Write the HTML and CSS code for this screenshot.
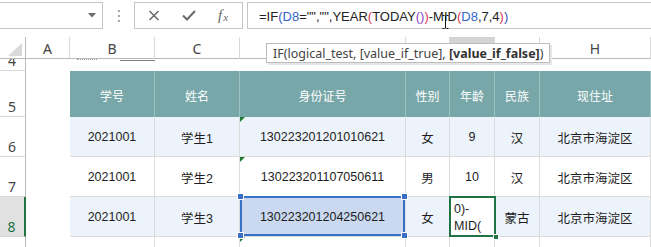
FILE: index.html
```html
<!DOCTYPE html>
<html lang="zh-CN">
<head>
<meta charset="utf-8">
<title>Sheet</title>
<link rel="stylesheet" href="styles.css">
</head>
<body>
<div class="app">
  <div class="toolbar">
    <div class="namebox">
      <svg class="dd" width="8" height="5" viewBox="0 0 8 5"><path d="M0 0h8L4 4.5z" fill="#6b6b6b"/></svg>
    </div>
    <div class="grip"><i></i><i></i><i></i></div>
    <div class="btns">
      <svg width="12" height="11" viewBox="0 0 12 11"><path d="M1.5 1l9 9M10.5 1l-9 9" stroke="#6a6a6a" stroke-width="1.5" fill="none"/></svg>
      <svg width="14" height="11" viewBox="0 0 14 11"><path d="M1 5.5l4 4L13 1" stroke="#6a6a6a" stroke-width="2" fill="none"/></svg>
      <span class="fx">f<span class="fxx">x</span></span>
    </div>
    <div class="formula"><span>=IF</span><span class="p1">(</span><span class="ref">D8</span>="","",YEAR<span class="p2">(</span>TODAY<span class="p3">()</span><span class="p2">)</span>-MID<span class="p2">(</span><span class="ref">D8</span>,7,4<span class="p2">)</span><span class="p1">)</span></div>
  </div>

  <div class="sheet">
    <!-- column header row -->
    <div class="ch corner"><span class="tri"></span></div>
    <div class="ch">A</div>
    <div class="ch">B</div>
    <div class="ch">C</div>
    <div class="ch">D</div>
    <div class="ch">E</div>
    <div class="ch ch-act">F</div>
    <div class="ch">G</div>
    <div class="ch">H</div>

    <!-- row 4 -->
    <div class="rh">4</div>
    <div class="blank"></div>
    <div class="blank"><span class="frag"></span><span class="uline"></span></div>
    <div class="blank"></div>
    <div class="blank"></div>
    <div class="blank"></div>
    <div class="blank"></div>
    <div class="blank"></div>
    <div class="blank"></div>

    <!-- row 5 header -->
    <div class="rh">5</div>
    <div class="blank"></div>
    <div class="th">学号</div>
    <div class="th">姓名</div>
    <div class="th">身份证号</div>
    <div class="th">性别</div>
    <div class="th">年龄</div>
    <div class="th">民族</div>
    <div class="th">现住址</div>

    <!-- row 6 -->
    <div class="rh">6</div>
    <div class="blank"></div>
    <div class="td alt">2021001</div>
    <div class="td alt">学生1</div>
    <div class="td alt err">130223201201010621</div>
    <div class="td alt">女</div>
    <div class="td alt">9</div>
    <div class="td alt">汉</div>
    <div class="td alt">北京市海淀区</div>

    <!-- row 7 -->
    <div class="rh">7</div>
    <div class="blank"></div>
    <div class="td">2021001</div>
    <div class="td">学生2</div>
    <div class="td err">130223201107050611</div>
    <div class="td">男</div>
    <div class="td">10</div>
    <div class="td">汉</div>
    <div class="td">北京市海淀区</div>

    <!-- row 8 -->
    <div class="rh rh-act">8</div>
    <div class="blank"></div>
    <div class="td alt">2021001</div>
    <div class="td alt">学生3</div>
    <div class="td sel err">130223201204250621
      <span class="selbox"><i class="hd tl"></i><i class="hd tr"></i><i class="hd bl"></i><i class="hd br"></i></span>
    </div>
    <div class="td alt">女</div>
    <div class="td active"><span class="edit">0)-<br>MID(</span><span class="actbox"><i class="fill"></i></span></div>
    <div class="td alt">蒙古</div>
    <div class="td alt">北京市海淀区</div>

    <!-- row 9 -->
    <div class="rh">9</div>
    <div class="blank"></div>
    <div class="td"></div>
    <div class="td"></div>
    <div class="td err"></div>
    <div class="td"></div>
    <div class="td"></div>
    <div class="td"></div>
    <div class="td"></div>
  </div>

  <div class="tooltip">IF(logical_test, [value_if_true], <b>[value_if_false]</b>)</div>
  <svg class="ibeam" width="9" height="16" viewBox="0 0 9 16"><path d="M1.5 1.5h2M5.5 1.5h2M4.5 1.5v13M1.5 14.5h2M5.5 14.5h2" stroke="#111" stroke-width="1" fill="none"/></svg>
</div>
</body>
</html>
```

FILE: styles.css
```css
html, body {
  margin: 0;
  padding: 0;
  background: #ffffff;
  overflow: hidden;
}

.app {
  position: relative;
  width: 651px;
  height: 247px;
  overflow: hidden;
  font-family: "Liberation Sans", "Noto Sans CJK SC", sans-serif;
  color: #222;
}

/* ---------- toolbar ---------- */
.toolbar {
  display: flex;
  align-items: flex-start;
  height: 37px;
  padding-top: 2px;
  box-sizing: border-box;
}

.namebox {
  box-sizing: border-box;
  width: 104px;
  height: 27px;
  margin-left: -1px;
  border: 1px solid #c6c6c6;
  background: #fff;
  display: flex;
  align-items: center;
  justify-content: flex-end;
  padding-right: 6px;
}

.grip {
  width: 31px;
  height: 27px;
  display: flex;
  flex-direction: column;
  align-items: center;
  justify-content: center;
  gap: 3px;
}
.grip i {
  display: block;
  width: 2px;
  height: 2px;
  background: #a8a8a8;
}

.btns {
  box-sizing: border-box;
  width: 109px;
  height: 27px;
  border: 1px solid #c6c6c6;
  display: flex;
  align-items: center;
  padding-left: 13px;
  gap: 23px;
}
.btns svg { display: block; }
.btns svg:nth-child(2) { margin-left: -1px; }

.fx {
  font-family: "Liberation Serif", serif;
  font-style: italic;
  font-size: 15px;
  color: #666;
  margin-left: -1px;
  line-height: 1;
}
.fxx {
  font-size: 11px;
  position: relative;
  top: 1px;
  margin-left: 1px;
}

.formula {
  box-sizing: border-box;
  flex: 1;
  height: 27px;
  margin-left: 4px;
  margin-right: -2px;
  border: 1px solid #c6c6c6;
  display: flex;
  align-items: center;
  padding-left: 11px;
  padding-top: 2px;
  font-family: "Liberation Sans", sans-serif;
  font-size: 13px;
  color: #222;
  white-space: pre;
}
.ref { color: #3565c8; }
.p1 { color: #3a55b8; }
.p2 { color: #e0365a; }
.p3 { color: #8b3dbd; }

/* ---------- sheet ---------- */
.sheet {
  display: grid;
  grid-template-columns: 26px 44px 85px 85px 166px 44px 45px 45px 111px;
  grid-template-rows: 22px 12px 46px 40px 40px 40px 40px;
}

.ch {
  box-sizing: border-box;
  border-right: 1px solid #d9d9d9;
  border-bottom: 1px solid #b9b9b9;
  display: flex;
  align-items: center;
  justify-content: center;
  padding-top: 2px;
  font-family: "Noto Sans", sans-serif;
  font-size: 14px;
  color: #444;
}
.ch.corner {
  position: relative;
  border-right-color: #b9b9b9;
}
.tri {
  position: absolute;
  right: 3px;
  bottom: 2px;
  width: 0;
  height: 0;
  border-left: 14px solid transparent;
  border-bottom: 13px solid #dadada;
}
.ch-act {
  background: #d3d3d3;
  border-bottom: 2px solid #217346;
  color: #217346;
}

.rh {
  box-sizing: border-box;
  border-right: 1px solid #b9b9b9;
  border-bottom: 1px solid #d9d9d9;
  display: flex;
  align-items: flex-end;
  justify-content: center;
  padding-bottom: 2px;
  padding-right: 1px;
  font-family: "Noto Sans", sans-serif;
  font-size: 14px;
  line-height: 1;
  color: #444;
  overflow: hidden;
}
.rh-act {
  background: #e1e1e1;
  border-right: 2px solid #217346;
  color: #217346;
}

.blank {
  background: #fff;
  position: relative;
}
.frag {
  position: absolute;
  left: 7px;
  top: 0;
  width: 20px;
  height: 2px;
  border-top: 1px dotted #9a9a9a;
}
.uline {
  position: absolute;
  left: 50px;
  top: 1px;
  width: 78px;
  height: 0;
  border-top: 1px solid #7d7d7d;
}

.th {
  box-sizing: border-box;
  background: #77a7a8;
  border-right: 1px solid #9cc2c2;
  display: flex;
  align-items: center;
  justify-content: center;
  color: #fff;
  font-size: 12px;
  padding-top: 2px;
}

.td {
  box-sizing: border-box;
  background: #fff;
  border-right: 1px solid #dcdcdc;
  border-bottom: 1px solid #dcdcdc;
  display: flex;
  align-items: center;
  justify-content: center;
  font-size: 12.5px;
  color: #1e1e1e;
  position: relative;
  padding-top: 1px;
}
.td.alt { background: #edf3fa; }

.err::before {
  content: "";
  position: absolute;
  left: 0;
  top: 0;
  width: 0;
  height: 0;
  border-top: 5px solid #1f7a32;
  border-right: 5px solid transparent;
}

.td.sel { background: #cad9f0; }
.selbox {
  position: absolute;
  left: 0;
  right: 0;
  top: -1px;
  bottom: 0;
  border: 2px solid #3a6fc6;
  z-index: 2;
}
.hd {
  position: absolute;
  width: 5px;
  height: 5px;
  background: #3a6fc6;
  outline: 1px solid #fff;
}
.hd.tl { left: -4px; top: -4px; }
.hd.tr { right: -4px; top: -4px; }
.hd.bl { left: -4px; bottom: -4px; }
.hd.br { right: -4px; bottom: -4px; }

.td.active {
  background: #fff;
  display: block;
  padding: 4px 0 0 4px;
  overflow: visible;
}
.edit {
  display: block;
  font-size: 12.5px;
  line-height: 17px;
  color: #1e1e1e;
}
.actbox {
  position: absolute;
  left: -1px;
  right: -2px;
  top: -1px;
  bottom: -1px;
  border: 2px solid #217346;
  z-index: 2;
}
.fill {
  position: absolute;
  right: -4px;
  bottom: -4px;
  width: 4px;
  height: 4px;
  background: #217346;
  outline: 1px solid #fff;
}

/* ---------- overlays ---------- */
.tooltip {
  position: absolute;
  left: 266px;
  top: 43px;
  height: 20px;
  box-sizing: border-box;
  padding: 0 5px 0 6px;
  display: flex;
  align-items: center;
  background: #fff;
  border: 1px solid #bcbcbc;
  box-shadow: 2px 2px 0 #e6e6e6;
  font-family: "Noto Sans", "Liberation Sans", sans-serif;
  font-size: 12.5px;
  color: #444;
  white-space: pre;
  z-index: 5;
}
.tooltip b { color: #333; font-weight: 700; }

.ibeam {
  position: absolute;
  left: 441px;
  top: 14px;
  z-index: 6;
}
```
